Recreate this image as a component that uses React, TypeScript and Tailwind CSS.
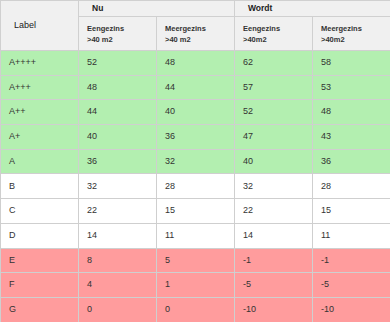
const rows: { label: string; vals: string[]; tone: "green" | "white" | "red" }[] = [
  { label: "A++++", vals: ["52", "48", "62", "58"], tone: "green" },
  { label: "A+++", vals: ["48", "44", "57", "53"], tone: "green" },
  { label: "A++", vals: ["44", "40", "52", "48"], tone: "green" },
  { label: "A+", vals: ["40", "36", "47", "43"], tone: "green" },
  { label: "A", vals: ["36", "32", "40", "36"], tone: "green" },
  { label: "B", vals: ["32", "28", "32", "28"], tone: "white" },
  { label: "C", vals: ["22", "15", "22", "15"], tone: "white" },
  { label: "D", vals: ["14", "11", "14", "11"], tone: "white" },
  { label: "E", vals: ["8", "5", "-1", "-1"], tone: "red" },
  { label: "F", vals: ["4", "1", "-5", "-5"], tone: "red" },
  { label: "G", vals: ["0", "0", "-10", "-10"], tone: "red" },
];

const toneClass = {
  green: "bg-[#b3efb0]",
  white: "bg-white",
  red: "bg-[#ff9c9d]",
};

export default function App() {
  return (
    <div className="w-[390px] h-[322px] bg-white overflow-hidden font-['Liberation_Sans',Arial,sans-serif] text-[#333]">
      <table className="w-full table-fixed border-collapse border border-[#d0d0d0]">
        <colgroup>
          <col className="w-[78px]" />
          <col className="w-[78px]" />
          <col className="w-[78px]" />
          <col className="w-[78px]" />
          <col className="w-[78px]" />
        </colgroup>
        <thead className="bg-[#f0f0f0] text-[#222]">
          <tr className="h-[16px]">
            <th rowSpan={2} className="border border-[#d0d0d0] px-[13px] text-left text-[9px] font-medium">
              Label
            </th>
            <th colSpan={2} className="border border-[#d0d0d0] px-[13px] text-left text-[8.5px] font-bold leading-none">
              Nu
            </th>
            <th colSpan={2} className="border border-[#d0d0d0] px-[13px] text-left text-[8.5px] font-bold leading-none">
              Wordt
            </th>
          </tr>
          <tr className="h-[34px]">
            {["Eengezins\n>40 m2", "Meergezins\n>40 m2", "Eengezins\n>40m2", "Meergezins\n>40m2"].map((t) => (
              <th
                key={t}
                className="border border-[#d0d0d0] px-2 text-left text-[7.5px] font-bold leading-[11px] whitespace-pre-line text-[#333]"
              >
                {t}
              </th>
            ))}
          </tr>
        </thead>
        <tbody className="text-[9px]">
          {rows.map((r) => (
            <tr key={r.label} className={`h-[24.7px] ${toneClass[r.tone]}`}>
              <td className="border border-[#cfcfcf] px-2 py-0">{r.label}</td>
              {r.vals.map((v, i) => (
                <td key={i} className="border border-[#cfcfcf] px-2 py-0">
                  {v}
                </td>
              ))}
            </tr>
          ))}
        </tbody>
      </table>
    </div>
  );
}
